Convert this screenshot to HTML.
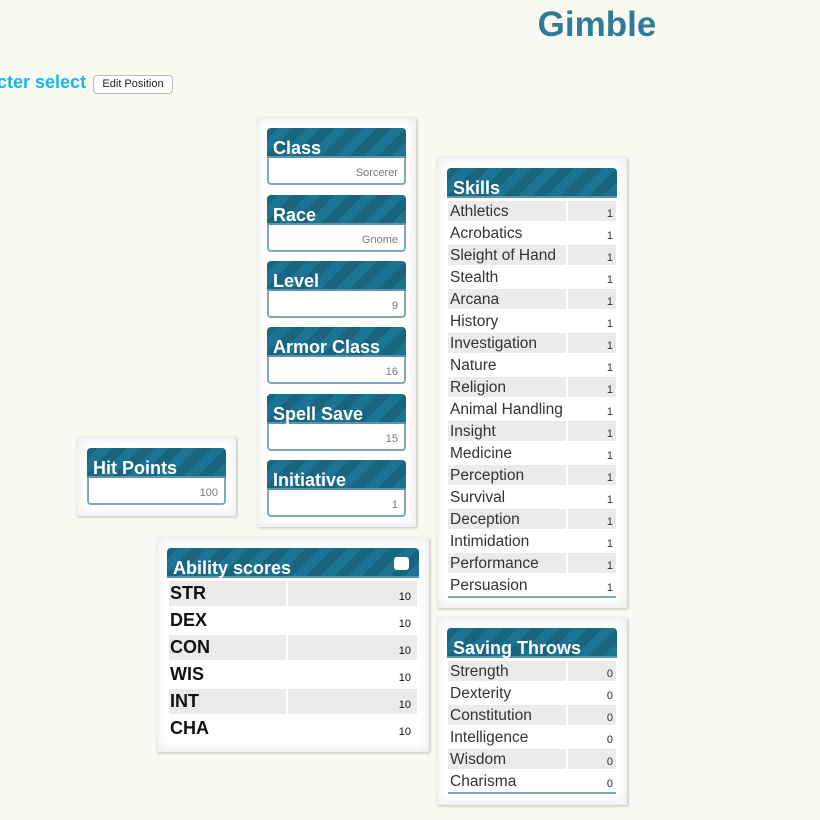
<!DOCTYPE html>
<html><head><style>
*{box-sizing:border-box;margin:0;padding:0}
body{width:820px;height:820px;background:#fafaf2;font-family:"Liberation Sans",Arial,sans-serif;position:relative;overflow:hidden}
h1{position:absolute;left:497px;width:200px;text-align:center;top:5px;font-size:35px;color:#2f7b9a;font-weight:bold}
.sel{position:absolute;left:-3px;top:72px;font-size:18px;font-weight:bold;color:#19b5ee}
.btn{position:absolute;left:93px;top:75px;width:80px;height:19px;border:1px solid #bbb;border-radius:4px;background:#fff;font-size:11px;color:#222;text-align:center;line-height:17px}
.panel{position:absolute;background:#fff;box-shadow:inset 0 0 12px #e6e6e6,1px 1px 3px rgba(0,0,0,.25)}
.hd{position:absolute;height:30px;border-radius:4px 4px 0 0;background:repeating-linear-gradient(-45deg,#1d7492 0 10px,#196580 10px 20px);color:#fff;font-weight:bold;font-size:18px;padding:10px 0 0 6px;line-height:20px;border-bottom:2px solid #5d93ab}
.in{position:absolute;height:27px;background:#fff;border:2px solid #7fa8bd;border-top:none;border-radius:0 0 4px 4px;font-size:11px;color:#777;text-align:right;padding:9px 6px 0 0}
.rows{position:absolute}
.r{display:flex;height:22px;font-size:15.5px;color:#333;white-space:nowrap;overflow:hidden}
.r .l{width:118px;height:20px;line-height:21px;padding-left:2px;margin-top:1px}
.r .v{margin-left:2px;flex:1;height:20px;margin-top:1px;font-size:11px;text-align:right;padding-right:3px;line-height:26px}
.r.g .l,.r.g .v{background:#ebebeb}
.a{display:flex;height:27px;font-weight:bold;font-size:18px;color:#111}
.a .l{width:117px;height:25px;line-height:25px;margin-top:1px;padding-left:1px}
.a .v{margin-left:2px;flex:1;height:25px;margin-top:1px;font-size:11px;text-align:right;padding-right:6px;line-height:32px;font-weight:normal}
.a.g .l,.a.g .v{background:#ebebeb}
</style></head><body>
<h1>Gimble</h1>
<div class="sel">cter select</div>
<div class="btn">Edit Position</div>

<div class="panel" style="left:257px;top:118px;width:159px;height:409px"></div>
<div class="hd" style="left:267px;top:128px;width:139px">Class</div><div class="in" style="left:267px;top:158px;width:139px">Sorcerer</div>
<div class="hd" style="left:267px;top:195px;width:139px">Race</div><div class="in" style="left:267px;top:225px;width:139px">Gnome</div>
<div class="hd" style="left:267px;top:261px;width:139px">Level</div><div class="in" style="left:267px;top:291px;width:139px">9</div>
<div class="hd" style="left:267px;top:327px;width:139px">Armor Class</div><div class="in" style="left:267px;top:357px;width:139px">16</div>
<div class="hd" style="left:267px;top:394px;width:139px">Spell Save</div><div class="in" style="left:267px;top:424px;width:139px">15</div>
<div class="hd" style="left:267px;top:460px;width:139px">Initiative</div><div class="in" style="left:267px;top:490px;width:139px">1</div>

<div class="panel" style="left:77px;top:437px;width:159px;height:79px"></div>
<div class="hd" style="left:87px;top:448px;width:139px">Hit Points</div><div class="in" style="left:87px;top:478px;width:139px">100</div>

<div class="panel" style="left:157px;top:538px;width:272px;height:214px"></div>
<div class="hd" style="left:167px;top:548px;width:252px">Ability scores<span style="position:absolute;right:10px;top:9px;width:15px;height:13px;background:#fff;border-radius:3px"></span></div>
<div class="rows" style="left:169px;top:580px;width:248px">
<div class="a g"><div class="l">STR</div><div class="v">10</div></div>
<div class="a"><div class="l">DEX</div><div class="v">10</div></div>
<div class="a g"><div class="l">CON</div><div class="v">10</div></div>
<div class="a"><div class="l">WIS</div><div class="v">10</div></div>
<div class="a g"><div class="l">INT</div><div class="v">10</div></div>
<div class="a"><div class="l">CHA</div><div class="v">10</div></div>
</div>

<div class="panel" style="left:437px;top:157px;width:190px;height:451px"></div>
<div class="hd" style="left:447px;top:168px;width:170px">Skills</div>
<div class="rows" style="left:448px;top:200px;width:168px;border-bottom:2px solid #7fa8bd">
<div class="r g"><div class="l">Athletics</div><div class="v">1</div></div>
<div class="r"><div class="l">Acrobatics</div><div class="v">1</div></div>
<div class="r g"><div class="l">Sleight of Hand</div><div class="v">1</div></div>
<div class="r"><div class="l">Stealth</div><div class="v">1</div></div>
<div class="r g"><div class="l">Arcana</div><div class="v">1</div></div>
<div class="r"><div class="l">History</div><div class="v">1</div></div>
<div class="r g"><div class="l">Investigation</div><div class="v">1</div></div>
<div class="r"><div class="l">Nature</div><div class="v">1</div></div>
<div class="r g"><div class="l">Religion</div><div class="v">1</div></div>
<div class="r"><div class="l">Animal Handling</div><div class="v">1</div></div>
<div class="r g"><div class="l">Insight</div><div class="v">1</div></div>
<div class="r"><div class="l">Medicine</div><div class="v">1</div></div>
<div class="r g"><div class="l">Perception</div><div class="v">1</div></div>
<div class="r"><div class="l">Survival</div><div class="v">1</div></div>
<div class="r g"><div class="l">Deception</div><div class="v">1</div></div>
<div class="r"><div class="l">Intimidation</div><div class="v">1</div></div>
<div class="r g"><div class="l">Performance</div><div class="v">1</div></div>
<div class="r"><div class="l">Persuasion</div><div class="v">1</div></div>
</div>

<div class="panel" style="left:437px;top:618px;width:190px;height:187px"></div>
<div class="hd" style="left:447px;top:628px;width:170px">Saving Throws</div>
<div class="rows" style="left:448px;top:660px;width:168px;border-bottom:2px solid #7fa8bd">
<div class="r g"><div class="l">Strength</div><div class="v">0</div></div>
<div class="r"><div class="l">Dexterity</div><div class="v">0</div></div>
<div class="r g"><div class="l">Constitution</div><div class="v">0</div></div>
<div class="r"><div class="l">Intelligence</div><div class="v">0</div></div>
<div class="r g"><div class="l">Wisdom</div><div class="v">0</div></div>
<div class="r"><div class="l">Charisma</div><div class="v">0</div></div>
</div>
</body></html>
